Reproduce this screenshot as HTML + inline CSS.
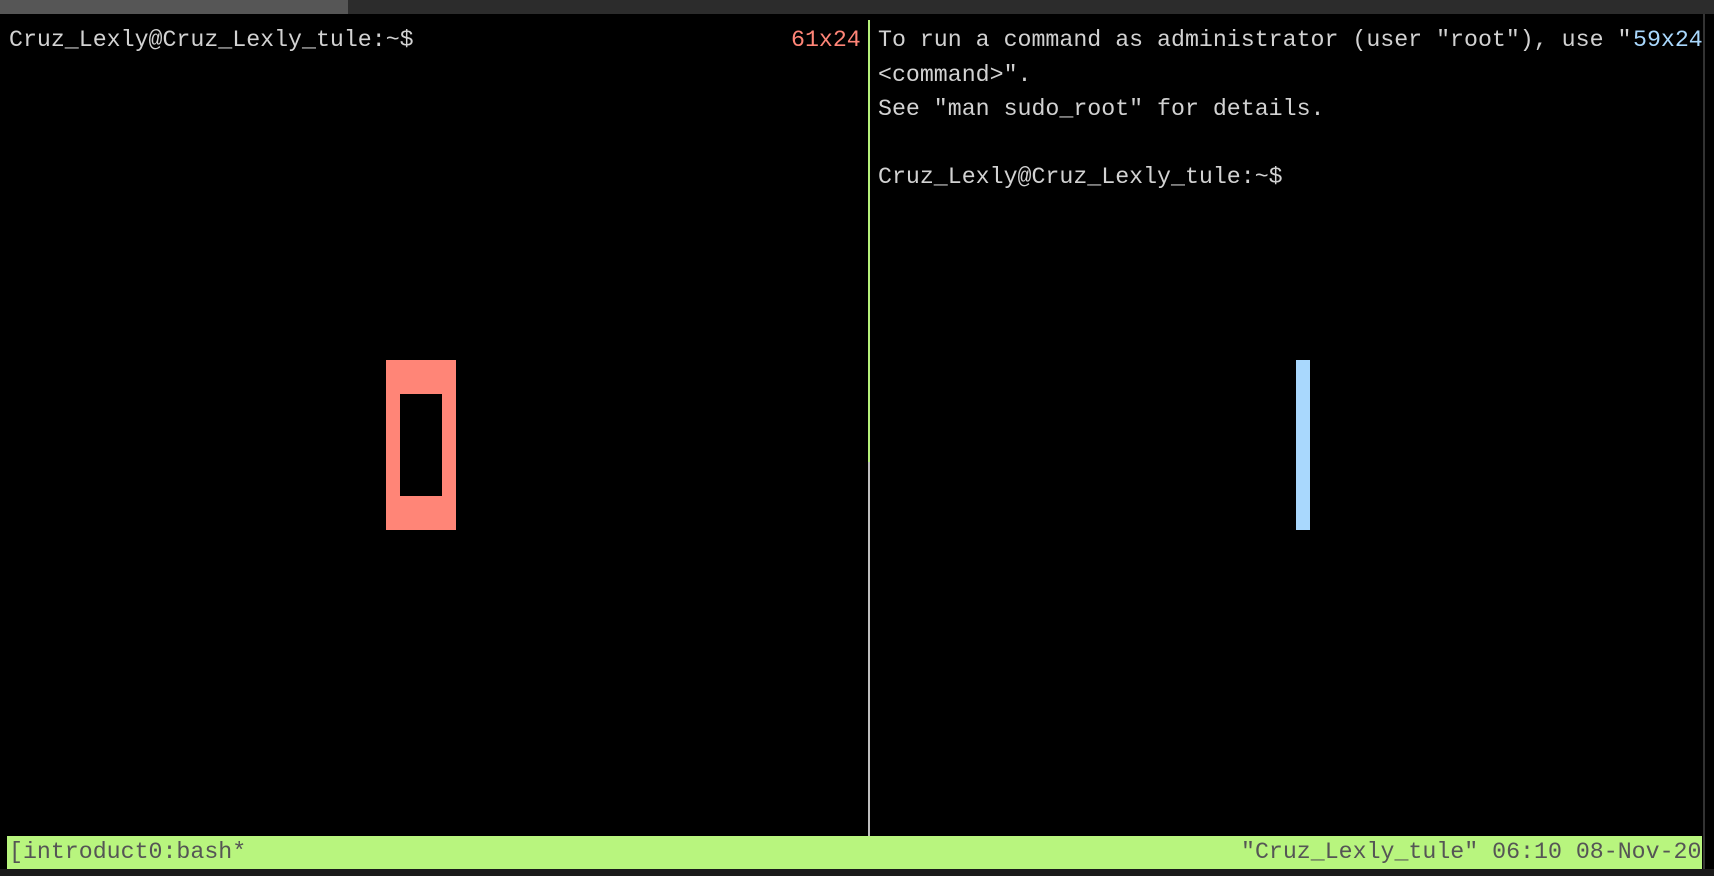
<!DOCTYPE html>
<html><head><meta charset="utf-8"><style>
html,body{margin:0;padding:0;background:#000;width:1714px;height:876px;overflow:hidden;position:relative}
.t{position:absolute;font-family:"Liberation Mono",monospace;font-size:23.25px;color:#d2d2d2;white-space:pre;line-height:34px}
.b{position:absolute}
</style></head><body>
<div class="b" style="left:0;top:0;width:348px;height:14px;background:#565656"></div>
<div class="b" style="left:348px;top:0;width:1366px;height:14px;background:#2c2c2c"></div>
<div class="t" style="left:9px;top:23px">Cruz_Lexly@Cruz_Lexly_tule:~$</div>
<div class="t" style="left:791px;top:23px;color:#ff8577">61x24</div>
<div class="t" style="left:878px;top:23px">To run a command as administrator (user "root"), use "</div>
<div class="t" style="left:1633px;top:23px;color:#a9d8fd">59x24</div>
<div class="t" style="left:878px;top:58px">&lt;command&gt;".
See "man sudo_root" for details.

Cruz_Lexly@Cruz_Lexly_tule:~$</div>
<div class="b" style="left:868px;top:20px;width:2px;height:442px;background:#b5f07a"></div>
<div class="b" style="left:868px;top:462px;width:2px;height:374px;background:#bdbdbd"></div>
<div class="b" style="left:386px;top:360px;width:70px;height:170px;background:#ff8577"></div>
<div class="b" style="left:400px;top:394px;width:42px;height:102px;background:#000"></div>
<div class="b" style="left:1296px;top:360px;width:14px;height:170px;background:#a9d8fd"></div>
<div class="b" style="left:7px;top:836px;width:1695px;height:33px;background:#b8f57e"></div>
<div class="t" style="left:9px;top:835px;color:#555;line-height:35px">[introduct0:bash*</div>
<div class="t" style="left:1241px;top:835px;color:#555;line-height:35px">"Cruz_Lexly_tule" 06:10 08-Nov-20</div>
<div class="b" style="left:1703px;top:14px;width:2px;height:855px;background:#333"></div>
<div class="b" style="left:0;top:869px;width:1714px;height:7px;background:#1a1a1a"></div>
</body></html>
